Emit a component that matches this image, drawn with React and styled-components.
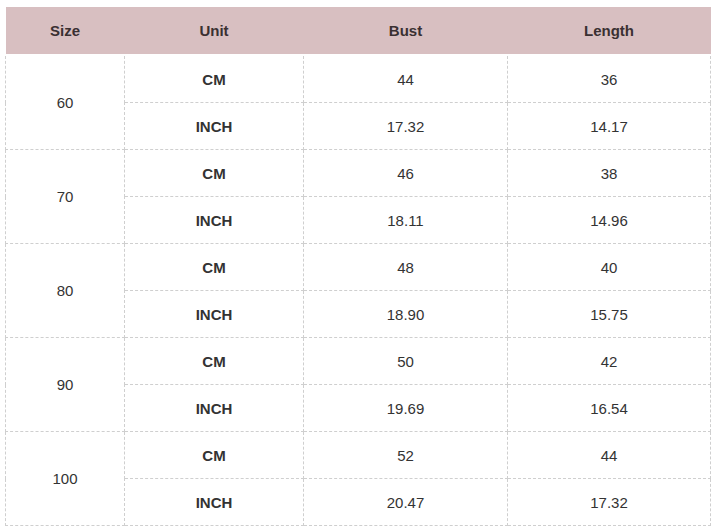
import React from 'react';
import styled, { createGlobalStyle } from 'styled-components';

const GlobalStyle = createGlobalStyle`
  html, body {
    margin: 0;
    padding: 0;
    background: #fff;
  }
  body {
    font-family: "Liberation Sans", Arial, sans-serif;
  }
`;

const Page = styled.div`
  padding: 7px 0 0 5px;
`;

const Table = styled.table`
  width: 705px;
  border-collapse: collapse;
  table-layout: fixed;
  color: #333;
  font-size: 15px;
`;

const HeadCell = styled.th`
  height: 47px;
  padding: 0;
  background: #d8bfc1;
  color: #3a3032;
  font-weight: bold;
  text-align: center;
  border-bottom: 2px solid #fff;
`;

const Cell = styled.td`
  height: 46px;
  padding: 0;
  text-align: center;
  vertical-align: middle;
  border: 1px dashed #cfcfcf;
  font-weight: ${(p) => (p.$bold ? 'bold' : 'normal')};
`;

const rows = [
  { size: '60', cm: ['44', '36'], inch: ['17.32', '14.17'] },
  { size: '70', cm: ['46', '38'], inch: ['18.11', '14.96'] },
  { size: '80', cm: ['48', '40'], inch: ['18.90', '15.75'] },
  { size: '90', cm: ['50', '42'], inch: ['19.69', '16.54'] },
  { size: '100', cm: ['52', '44'], inch: ['20.47', '17.32'] },
];

export default function App() {
  return (
    <Page>
      <GlobalStyle />
      <Table>
        <colgroup>
          <col style={{ width: 119 }} />
          <col style={{ width: 179 }} />
          <col style={{ width: 204 }} />
          <col style={{ width: 203 }} />
        </colgroup>
        <thead>
          <tr>
            <HeadCell>Size</HeadCell>
            <HeadCell>Unit</HeadCell>
            <HeadCell>Bust</HeadCell>
            <HeadCell>Length</HeadCell>
          </tr>
        </thead>
        <tbody>
          {rows.map((r) => (
            <React.Fragment key={r.size}>
              <tr>
                <Cell rowSpan={2}>{r.size}</Cell>
                <Cell $bold>CM</Cell>
                <Cell>{r.cm[0]}</Cell>
                <Cell>{r.cm[1]}</Cell>
              </tr>
              <tr>
                <Cell $bold>INCH</Cell>
                <Cell>{r.inch[0]}</Cell>
                <Cell>{r.inch[1]}</Cell>
              </tr>
            </React.Fragment>
          ))}
        </tbody>
      </Table>
    </Page>
  );
}
